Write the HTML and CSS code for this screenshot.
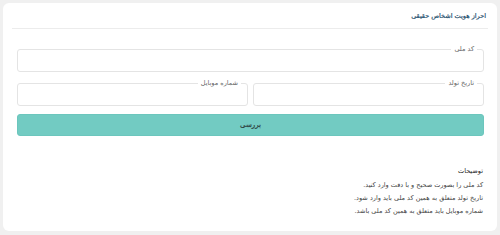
FILE: index.html
```html
<!DOCTYPE html>
<html lang="fa" dir="rtl">
<head>
    <meta charset="UTF-8">
    <meta name="viewport" content="width=device-width, initial-scale=1.0">
    <title>احراز هویت اشخاص حقیقی</title>
    <link rel="stylesheet" href="styles.css">
</head>
<body>

    <!-- Card -->
    <div class="card">
        <div class="card__header">
            <h2 class="card__title">احراز هویت اشخاص حقیقی</h2>
        </div>

        <form class="card__body">
            <fieldset class="field">
                <legend class="field__label">کد ملی</legend>
                <input type="text" class="field__input">
            </fieldset>

            <div class="row">
                <fieldset class="field">
                    <legend class="field__label">تاریخ تولد</legend>
                    <input type="text" class="field__input">
                </fieldset>
                <fieldset class="field">
                    <legend class="field__label">شماره موبایل</legend>
                    <input type="text" class="field__input">
                </fieldset>
            </div>

            <button type="button" class="btn">بررسی</button>
        </form>

        <!-- Notes -->
        <div class="notes">
            <h3 class="notes__title">توضیحات</h3>
            <p>کد ملی را بصورت صحیح و با دقت وارد کنید.</p>
            <p>تاریخ تولد متعلق به همین کد ملی باید وارد شود.</p>
            <p>شماره موبایل باید متعلق به همین کد ملی باشد.</p>
        </div>
    </div>

</body>
</html>
```

FILE: styles.css
```css
body {
    background-color: #f0f0f0;
    font-family: 'DejaVu Sans', 'Noto Sans', sans-serif;
    color: #444;
    margin: 0;
    padding: 3px;
}

/* Card */
.card {
    background-color: #fff;
    border-radius: 6px;
    height: 228px;
    box-sizing: border-box;
}

.card__header {
    margin: 0 9px;
    height: 25px;
    border-bottom: 1px solid #ececec;
    display: flex;
    align-items: center;
}

.card__title {
    margin: 0;
    padding-right: 2px;
    font-size: 6.5px;
    font-weight: 400;
    color: #1f4f6e;
    -webkit-text-stroke: 0.2px #1f4f6e;
}

.card__body {
    padding: 16px 13px 0 14px;
    display: flex;
    flex-direction: column;
}

/* Fields */
.field {
    margin: 0;
    padding: 0;
    border: 1px solid #e4e4e4;
    border-radius: 3px;
    height: 27px;
    box-sizing: border-box;
    min-width: 0;
}

.field__label {
    margin-right: 6px;
    padding: 0 3px;
    font-size: 6.5px;
    line-height: 9px;
    color: #666;
}

.field__input {
    display: block;
    width: 100%;
    height: 100%;
    border: none;
    background: transparent;
    outline: none;
    padding: 0 6px;
    box-sizing: border-box;
}

.row {
    display: grid;
    grid-template-columns: 1fr 1fr;
    gap: 5px;
    margin-top: 7px;
}

.btn {
    margin-top: 8px;
    height: 22px;
    border: 1px solid #6cc6bd;
    border-radius: 3px;
    background-color: #72cbc2;
    color: #2a3b3a;
    font-family: inherit;
    font-size: 7px;
    font-weight: 400;
    -webkit-text-stroke: 0.2px #2a3b3a;
    cursor: pointer;
}

/* Notes */
.notes {
    padding: 29px 14px 0;
    font-size: 6.5px;
    line-height: 13px;
    color: #444;
}

.notes__title {
    margin: 0 0 1px;
    font-size: 6.5px;
    font-weight: 400;
    color: #222;
}

.notes p {
    margin: 0;
}
```
